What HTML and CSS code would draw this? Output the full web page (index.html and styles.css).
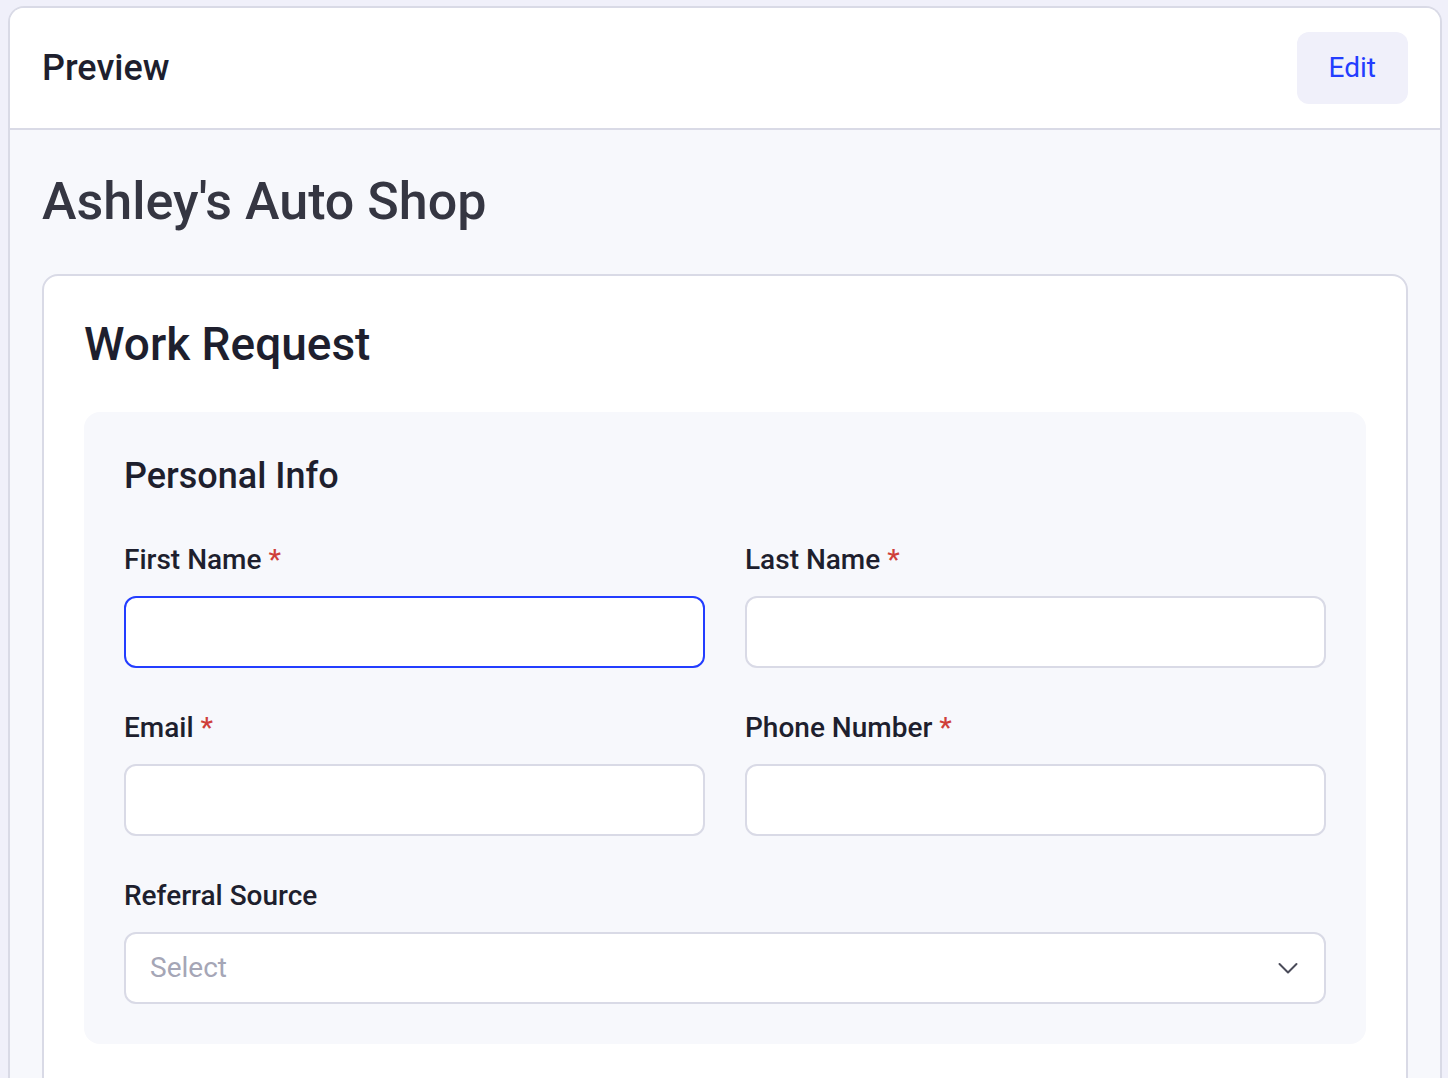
FILE: index.html
```html
<!DOCTYPE html>
<html lang="en">
<head>
<meta charset="utf-8">
<meta name="viewport" content="width=device-width, initial-scale=1">
<title>Preview</title>
<link rel="stylesheet" href="styles.css">
</head>
<body>
<main class="preview">
  <header class="preview-header">
    <h1 class="preview-title">Preview</h1>
    <button class="edit-button" type="button">Edit</button>
  </header>
  <div class="preview-body">
    <h2 class="shop-name">Ashley's Auto Shop</h2>
    <form class="request-card">
      <h3 class="request-title">Work Request</h3>
      <fieldset class="section">
        <legend class="section-title">Personal Info</legend>
        <div class="fields">
          <div class="field">
            <label class="label" for="first-name">First Name <span class="required">*</span></label>
            <input class="control" id="first-name" type="text" required autofocus>
          </div>
          <div class="field">
            <label class="label" for="last-name">Last Name <span class="required">*</span></label>
            <input class="control" id="last-name" type="text" required>
          </div>
          <div class="field">
            <label class="label" for="email">Email <span class="required">*</span></label>
            <input class="control" id="email" type="email" required>
          </div>
          <div class="field">
            <label class="label" for="phone">Phone Number <span class="required">*</span></label>
            <input class="control" id="phone" type="tel" required>
          </div>
          <div class="field field-wide">
            <label class="label" for="referral">Referral Source</label>
            <div class="select-wrap">
              <select class="control select" id="referral">
                <option value="">Select</option>
              </select>
              <svg class="chevron" viewBox="0 0 20 12" aria-hidden="true"><path d="M1.500 2 10 10.500 18.500 2"/></svg>
            </div>
          </div>
        </div>
      </fieldset>
    </form>
  </div>
</main>
</body>
</html>
```
FILE: styles.css
```css
*, *::before, *::after {
  box-sizing: border-box;
}

body {
  margin: 0;
  padding: 6px 6px 0 8px;
  background: #f0f0fa;
  color: #1e1f2e;
  font-family: Roboto, "Liberation Sans", sans-serif;
  font-size: 28px;
  line-height: 40px;
}

h1, h2, h3 {
  margin: 0;
  font-weight: 500;
}

.preview {
  min-height: calc(100vh - 6px);
  border: 2px solid #d9dae6;
  border-bottom: 0;
  border-radius: 16px 16px 0 0;
  background: #f7f8fc;
  overflow: hidden;
}

.preview-header {
  display: flex;
  align-items: center;
  justify-content: space-between;
  padding: 24px 32px;
  border-bottom: 2px solid #d9dae6;
  background: #fff;
}

.preview-title {
  font-size: 36px;
  line-height: 48px;
}

.edit-button {
  height: 72px;
  padding: 0 32px;
  border: 0;
  border-radius: 12px;
  background: #f0f0fa;
  color: #233dff;
  font: inherit;
}

.preview-body {
  padding: 40px 32px 0;
}

.shop-name {
  margin-bottom: 40px;
  color: #353642;
  font-size: 52px;
  line-height: 64px;
}

.request-card {
  padding: 40px 40px 48px;
  border: 2px solid #d9dae6;
  border-radius: 16px;
  background: #fff;
}

.request-title {
  margin-bottom: 40px;
  font-size: 46px;
  line-height: 56px;
}

.section {
  min-width: 0;
  margin: 0;
  padding: 40px;
  border: 0;
  border-radius: 16px;
  background: #f7f8fc;
}

.section-title {
  float: left;
  width: 100%;
  margin-bottom: 40px;
  padding: 0;
  font-size: 36px;
  font-weight: 500;
  line-height: 48px;
}

.fields {
  clear: both;
  display: grid;
  grid-template-columns: 1fr 1fr;
  gap: 40px;
}

.field {
  display: flex;
  flex-direction: column;
  gap: 16px;
  min-width: 0;
}

.field-wide {
  grid-column: 1 / -1;
}

.label {
  font-weight: 500;
}

.required {
  color: #cf3f3a;
}

.control {
  width: 100%;
  height: 72px;
  padding: 0 24px;
  border: 2px solid #d9dae6;
  border-radius: 12px;
  background: #fff;
  color: #1e1f2e;
  font: inherit;
  outline: none;
}

.control:focus {
  border-color: #233dff;
}

.select-wrap {
  display: grid;
  align-items: center;
}

.select {
  grid-area: 1 / 1;
  appearance: none;
  color: #a5a6b6;
}

.chevron {
  grid-area: 1 / 1;
  justify-self: end;
  width: 20px;
  height: 12px;
  margin-right: 28px;
  fill: none;
  stroke: #4a4b59;
  stroke-width: 2;
  stroke-linecap: round;
  stroke-linejoin: round;
  pointer-events: none;
}
```
